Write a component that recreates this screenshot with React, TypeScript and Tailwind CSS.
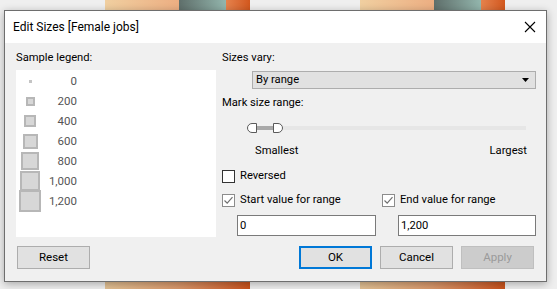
import React from "react";

const font = { fontFamily: "Roboto, 'Liberation Sans', sans-serif" };

function Bar() {
  return (
    <div className="flex flex-col justify-between w-[145px] h-full">
      <div className="flex h-[30px]">
        <div className="w-[74px] bg-gradient-to-r from-[#f0cfa0] to-[#ecae82]" />
        <div className="w-[47px] bg-gradient-to-r from-[#5f6f6b] to-[#93b6ad]" />
        <div className="flex-1 bg-gradient-to-r from-[#e5824c] to-[#d2571c]" />
      </div>
      <div className="h-[30px] bg-gradient-to-r from-[#e2c194] via-[#d9976a] to-[#c9521a]" />
    </div>
  );
}

function Sq({ size, border }: { size: number; border: number }) {
  return (
    <div
      className="bg-[#d7d7d7] border-[#b7b7b7]"
      style={{ width: size, height: size, borderWidth: border, borderStyle: "solid" }}
    />
  );
}

const legend: [string, number, number][] = [
  ["0", 3, 0],
  ["200", 9, 2],
  ["400", 12, 2],
  ["600", 15, 2],
  ["800", 18, 2],
  ["1,000", 20, 2],
  ["1,200", 22, 2],
];

function Check({ checked }: { checked?: boolean }) {
  return (
    <div
      className={
        "w-[13px] h-[13px] bg-white border flex items-center justify-center " +
        (checked ? "border-[#8c8c8c]" : "border-[#333333]")
      }
    >
      {checked && (
        <svg width="11" height="11" viewBox="0 0 11 11">
          <path d="M1.5 5.5 L4.2 8.2 L9.5 2.2" fill="none" stroke="#707070" strokeWidth="1.2" />
        </svg>
      )}
    </div>
  );
}

function Btn({ label, kind }: { label: string; kind?: "ok" | "off" }) {
  let cls = "w-[73px] h-[23px] flex items-center justify-center text-[11.5px] ";
  if (kind === "ok") cls += "bg-[#e1e1e1] border-2 border-[#0078d7] text-black";
  else if (kind === "off") cls += "bg-[#cccccc] border border-[#bfbfbf] text-[#9a9a9a]";
  else cls += "bg-[#e1e1e1] border border-[#adadad] text-black";
  return <div className={cls}>{label}</div>;
}

export default function App() {
  return (
    <div className="relative w-[557px] h-[289px] bg-[#efefef] overflow-hidden" style={font}>
      <div className="flex h-full pl-[105px] gap-[110px]">
        <Bar />
        <Bar />
      </div>

      <div className="absolute left-[4px] top-[10px] w-[543px] h-[272px] border border-[#6e6e6e] bg-[#f0f0f0] shadow-[0_2px_8px_rgba(0,0,0,0.3)] flex flex-col">
        <div className="h-[32px] bg-white flex items-center justify-between pl-[8px] pr-[10px]">
          <span className="text-[12px] text-black">Edit Sizes [Female jobs]</span>
          <svg width="12" height="12" viewBox="0 0 12 12">
            <path d="M1 1 L11 11 M11 1 L1 11" stroke="#000" strokeWidth="1.1" />
          </svg>
        </div>

        <div className="flex pt-[7px] text-[11.2px] leading-[16px]">
          <div className="ml-[11px] w-[200px] flex flex-col">
            <div className="h-[16px] text-black">Sample legend:</div>
            <div className="mt-[4px] h-[167px] bg-white pt-[1px]">
              {legend.map(([v, s, b]) => (
                <div key={v} className="flex items-center h-[20px]">
                  <div className="w-[28px] flex justify-center">
                    {b === 0 ? <div className="w-[3px] h-[3px] bg-[#c4c4c4]" /> : <Sq size={s} border={b} />}
                  </div>
                  <div className="w-[33px] text-right text-[#555555] text-[11.5px]">{v}</div>
                </div>
              ))}
            </div>
          </div>

          <div className="ml-[6px] w-[314px] flex flex-col">
            <div className="h-[16px] text-black">Sizes vary:</div>
            <div className="mt-[5px] ml-[30px] h-[18px] bg-[#e1e1e1] border border-[#adadad] flex items-center justify-between pl-[3px] pr-[6px]">
              <span className="text-black">By range</span>
              <svg width="7" height="4" viewBox="0 0 7 4">
                <path d="M0 0 H7 L3.5 4 Z" fill="#000" />
              </svg>
            </div>
            <div className="mt-[6px] h-[16px] text-black">Mark size range:</div>
            <div className="mt-[12px] ml-[25px] w-[279px] h-[10px] flex items-center">
              <div className="w-[10px] h-[10px] bg-white border border-[#5a5a5a] rounded-l-full" />
              <div className="w-[16px] h-[4px] bg-[#a9a9a9]" />
              <div className="w-[10px] h-[10px] bg-white border border-[#5a5a5a] rounded-r-full" />
              <div className="flex-1 h-[4px] bg-[#e6e6e6]" />
            </div>
            <div className="mt-[10px] h-[16px] flex justify-between pl-[33px] pr-[9px] text-black">
              <span>Smallest</span>
              <span>Largest</span>
            </div>
            <div className="mt-[9px] h-[16px] flex items-center gap-[5px]">
              <Check />
              <span className="text-black">Reversed</span>
            </div>
            <div className="mt-[8px] h-[16px] flex items-center">
              <div className="w-[160px] flex items-center gap-[5px]">
                <Check checked />
                <span className="text-black">Start value for range</span>
              </div>
              <div className="flex items-center gap-[5px]">
                <Check checked />
                <span className="text-black">End value for range</span>
              </div>
            </div>
            <div className="mt-[7px] flex">
              <div className="ml-[15px] w-[139px] h-[21px] bg-white border border-[#7a7a7a] flex items-center pl-[2px] text-black">0</div>
              <div className="ml-[22px] w-[138px] h-[21px] bg-white border border-[#7a7a7a] flex items-center pl-[2px] text-black">1,200</div>
            </div>
          </div>
        </div>

        <div className="mt-[9px] flex items-center pl-[12px] pr-[12px]">
          <Btn label="Reset" />
          <div className="flex-1" />
          <div className="flex gap-[8px]">
            <Btn label="OK" kind="ok" />
            <Btn label="Cancel" />
            <Btn label="Apply" kind="off" />
          </div>
        </div>
      </div>
    </div>
  );
}
